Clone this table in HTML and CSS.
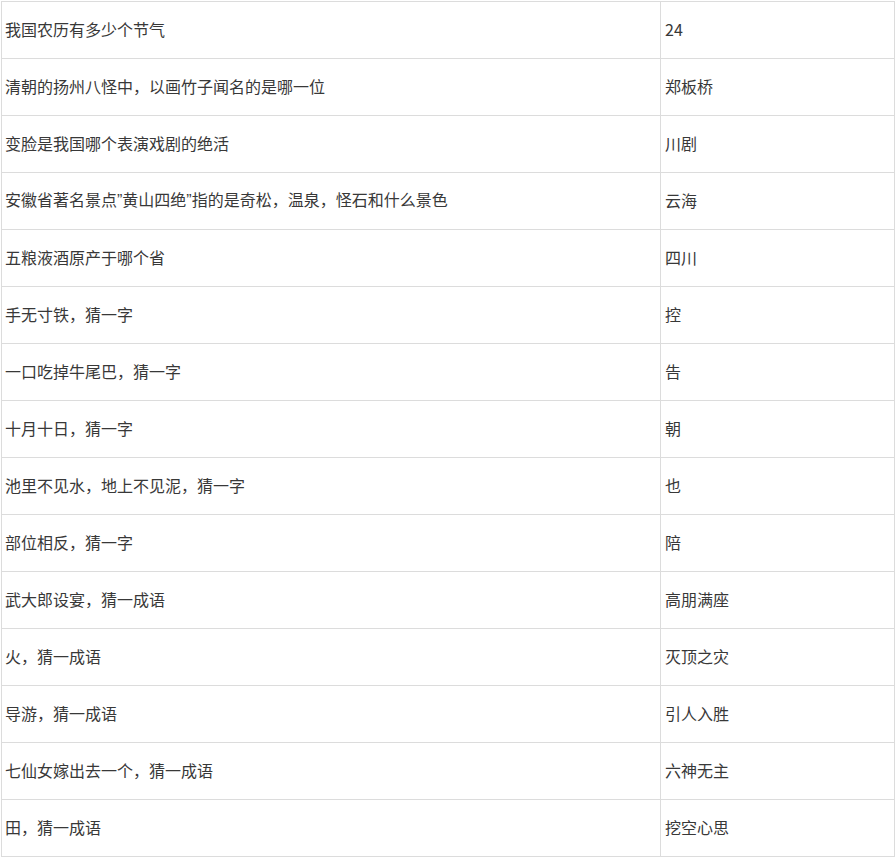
FILE: index.html
```html
<!DOCTYPE html>
<html lang="zh">
<head>
<meta charset="utf-8">
<link rel="stylesheet" href="styles.css">
</head>
<body>
<table class="quiz">
<tbody>
<tr><td class="q">我国农历有多少个节气</td><td class="a">24</td></tr>
<tr><td class="q">清朝的扬州八怪中，以画竹子闻名的是哪一位</td><td class="a">郑板桥</td></tr>
<tr><td class="q">变脸是我国哪个表演戏剧的绝活</td><td class="a">川剧</td></tr>
<tr><td class="q">安徽省著名景点<span class="latin">”</span>黄山四绝<span class="latin">”</span>指的是奇松，温泉，怪石和什么景色</td><td class="a">云海</td></tr>
<tr><td class="q">五粮液酒原产于哪个省</td><td class="a">四川</td></tr>
<tr><td class="q">手无寸铁，猜一字</td><td class="a">控</td></tr>
<tr><td class="q">一口吃掉牛尾巴，猜一字</td><td class="a">告</td></tr>
<tr><td class="q">十月十日，猜一字</td><td class="a">朝</td></tr>
<tr><td class="q">池里不见水，地上不见泥，猜一字</td><td class="a">也</td></tr>
<tr><td class="q">部位相反，猜一字</td><td class="a">陪</td></tr>
<tr><td class="q">武大郎设宴，猜一成语</td><td class="a">高朋满座</td></tr>
<tr><td class="q">火，猜一成语</td><td class="a">灭顶之灾</td></tr>
<tr><td class="q">导游，猜一成语</td><td class="a">引人入胜</td></tr>
<tr><td class="q">七仙女嫁出去一个，猜一成语</td><td class="a">六神无主</td></tr>
<tr><td class="q">田，猜一成语</td><td class="a">挖空心思</td></tr>
</tbody>
</table>
</body>
</html>
```
FILE: styles.css
```css
html, body {
  margin: 0;
  padding: 0;
  background: #fff;
}
body {
  padding: 1px 0 0 1px;
  font-family: "Microsoft YaHei", "Noto Sans CJK SC", "Noto Sans", sans-serif;
  font-size: 16px;
  color: #383838;
}
.quiz {
  border-collapse: collapse;
  width: 894px;
  table-layout: fixed;
}
.quiz td {
  border: 1px solid #dcdcdc;
  height: 54px;
  padding: 0 3px 2px 3px;
  vertical-align: middle;
  line-height: 20px;
  white-space: nowrap;
}
.quiz td.q {
  width: 652px;
}
.quiz td.a {
  padding-left: 4px;
}
.latin {
  font-family: "Liberation Sans", sans-serif;
}
```
